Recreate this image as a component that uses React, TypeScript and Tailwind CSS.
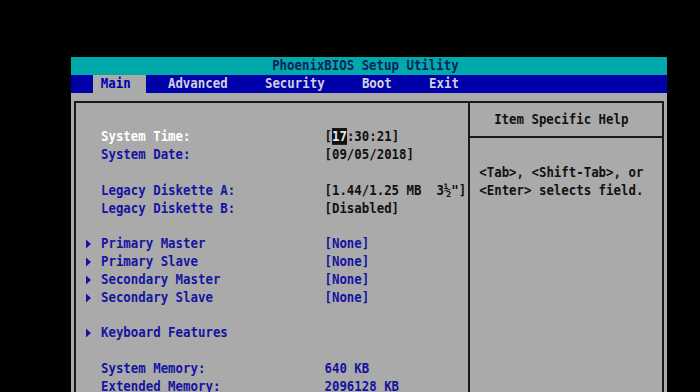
import React from 'react';

type Item = {
  arrow?: boolean;
  label?: string;
  value?: string;
  active?: boolean;
  valueBlue?: boolean;
  cursor?: boolean;
};

const items: Item[] = [
  {},
  { label: 'System Time:', value: ':30:21]', active: true, cursor: true },
  { label: 'System Date:', value: '[09/05/2018]' },
  {},
  { label: 'Legacy Diskette A:', value: '[1.44/1.25 MB  3½"]' },
  { label: 'Legacy Diskette B:', value: '[Disabled]' },
  {},
  { arrow: true, label: 'Primary Master', value: '[None]', valueBlue: true },
  { arrow: true, label: 'Primary Slave', value: '[None]', valueBlue: true },
  { arrow: true, label: 'Secondary Master', value: '[None]', valueBlue: true },
  { arrow: true, label: 'Secondary Slave', value: '[None]', valueBlue: true },
  {},
  { arrow: true, label: 'Keyboard Features' },
  {},
  { label: 'System Memory:', value: '640 KB', valueBlue: true },
  { label: 'Extended Memory:', value: '2096128 KB', valueBlue: true },
  {},
  {},
];

const row = 'h-[17.8px] leading-[17.8px] whitespace-pre';
// taller glyphs, closer to the VGA text font
const tall = 'scale-y-[1.12]';

const Arrow = () => (
  <svg width="5" height="8" viewBox="0 0 5 8" className="block">
    <polygon points="0,0 5,4 0,8" fill="#1414a0" />
  </svg>
);

const Row: React.FC<{ item: Item }> = ({ item }) => (
  <div className={`${row} ${tall} flex items-center`}>
    <span className="w-[14.9px] flex items-center">{item.arrow && <Arrow />}</span>
    <span className={`w-[223.5px] ${item.active ? 'text-white' : 'text-[#1414a0]'}`}>
      {item.label}
    </span>
    <span className={item.valueBlue ? 'text-[#1414a0]' : 'text-[#111]'}>
      {item.cursor ? (
        <>
          [<span className="bg-[#111] text-[#e6e6e6]">17</span>
        </>
      ) : null}
      {item.value}
    </span>
  </div>
);

const App: React.FC = () => {
  return (
    <div className="w-[700px] h-[392px] bg-black overflow-hidden pt-[57px] pl-[71px] font-['DejaVu_Sans_Mono',monospace] text-[12.4px] font-bold">
      <div className="w-[596px]">
        {/* title bar */}
        <div className={`${row} h-[18px] bg-[#00aaaa] text-[#0a1f5c] pl-[201.15px]`}>
          <span className={`inline-block ${tall}`}>PhoenixBIOS Setup Utility</span>
        </div>

        {/* menu bar */}
        <div className={`${row} bg-[#0000aa] text-[#d0d0e0] flex pl-[22.35px]`}>
          <span className="bg-[#aaaaaa] text-[#0000aa]">
            <span className={`inline-block ${tall}`}>{' Main  '}</span>
          </span>
          <span className={`inline-block ${tall}`}>{'   Advanced     Security     Boot     Exit'}</span>
        </div>

        {/* body */}
        <div className="bg-[#aaaaaa] pt-[8px] pl-[2.5px] pr-[3px] h-[400px]">
          <div className="flex border-t-2 border-l-2 border-r-2 border-[#1a1a1a] h-full">
            <div className="w-[394px] pt-[7.8px] pl-[10.6px] border-r-2 border-[#1a1a1a]">
              {items.map((it, i) => (
                <Row key={i} item={it} />
              ))}
            </div>
            <div className="flex-1 pt-[7.8px] text-[#111]">
              <div className={`${row} ${tall} pl-[24.65px]`}>Item Specific Help</div>
              <div className="mt-[7.9px] h-[2px] bg-[#1a1a1a]" />
              <div className="pt-[7.9px] pl-[9.75px]">
                <div className={row}> </div>
                <div className={`${row} ${tall}`}>{'<Tab>, <Shift-Tab>, or'}</div>
                <div className={`${row} ${tall}`}>{'<Enter> selects field.'}</div>
              </div>
            </div>
          </div>
        </div>
      </div>
    </div>
  );
};

export default App;
